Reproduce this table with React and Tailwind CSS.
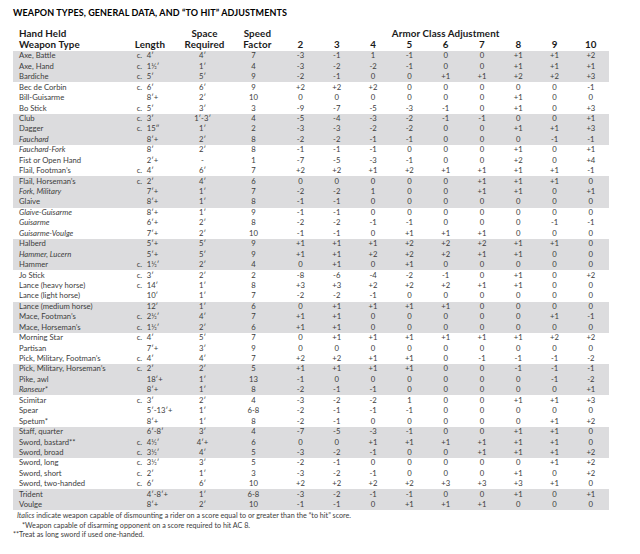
const data = `Axe, Battle|0|c.|4′|4′|7|-3 -1 1 -1 0 0 +1 +1 +2
Axe, Hand|0|c.|1½′|1′|4|-3 -2 -2 -1 0 0 +1 +1 +1
Bardiche|0|c.|5′|5′|9|-2 -1 0 0 +1 +1 +2 +2 +3
Bec de Corbin|0|c.|6′|6′|9|+2 +2 +2 0 0 0 0 0 -1
Bill-Guisarme|0||8′+|2′|10|0 0 0 0 0 0 +1 0 0
Bo Stick|0|c.|5′|3′|3|-9 -7 -5 -3 -1 0 +1 0 +3
Club|0|c.|3′|1′-3′|4|-5 -4 -3 -2 -1 -1 0 0 +1
Dagger|0|c.|15″|1′|2|-3 -3 -2 -2 0 0 +1 +1 +3
Fauchard|1||8′+|2′|8|-2 -2 -1 -1 0 0 0 -1 -1
Fauchard-Fork|1||8′|2′|8|-1 -1 -1 0 0 0 +1 0 +1
Fist or Open Hand|0||2′+|-|1|-7 -5 -3 -1 0 0 +2 0 +4
Flail, Footman’s|0|c.|4′|6′|7|+2 +2 +1 +2 +1 +1 +1 +1 -1
Flail, Horseman’s|0|c.|2′|4′|6|0 0 0 0 0 +1 +1 +1 0
Fork, Military|1||7′+|1′|7|-2 -2 1 0 0 +1 +1 0 +1
Glaive|0||8′+|1′|8|-1 -1 0 0 0 0 0 0 0
Glaive-Guisarme|1||8′+|1′|9|-1 -1 0 0 0 0 0 0 0
Guisarme|1||6′+|2′|8|-2 -2 -1 -1 0 0 0 -1 -1
Guisarme-Voulge|1||7′+|2′|10|-1 -1 0 +1 +1 +1 0 0 0
Halberd|0||5′+|5′|9|+1 +1 +1 +2 +2 +2 +1 +1 0
Hammer, Lucern|1||5′+|5′|9|+1 +1 +2 +2 +2 +1 +1 0 0
Hammer|0|c.|1½′|2′|4|0 +1 0 +1 0 0 0 0 0
Jo Stick|0|c.|3′|2′|2|-8 -6 -4 -2 -1 0 +1 0 +2
Lance (heavy horse)|0|c.|14′|1′|8|+3 +3 +2 +2 +2 +1 +1 0 0
Lance (light horse)|0||10′|1′|7|-2 -2 -1 0 0 0 0 0 0
Lance (medium horse)|0||12′|1′|6|0 +1 +1 +1 +1 0 0 0 0
Mace, Footman’s|0|c.|2½′|4′|7|+1 +1 0 0 0 0 0 +1 -1
Mace, Horseman’s|0|c.|1½′|2′|6|+1 +1 0 0 0 0 0 0 0
Morning Star|0|c.|4′|5′|7|0 +1 +1 +1 +1 +1 +1 +2 +2
Partisan|0||7′+|3′|9|0 0 0 0 0 0 0 0 0
Pick, Military, Footman’s|0|c.|4′|4′|7|+2 +2 +1 +1 0 -1 -1 -1 -2
Pick, Military, Horseman’s|0|c.|2′|2′|5|+1 +1 +1 +1 0 0 -1 -1 -1
Pike, awl|0||18′+|1′|13|-1 0 0 0 0 0 0 -1 -2
Ranseur*|1||8′+|1′|8|-2 -1 -1 0 0 0 0 0 +1
Scimitar|0|c.|3′|2′|4|-3 -2 -2 1 0 0 +1 +1 +3
Spear|0||5′-13′+|1′|6-8|-2 -1 -1 -1 0 0 0 0 0
Spetum*|0||8′+|1′|8|-2 -1 0 0 0 0 0 +1 +2
Staff, quarter|0||6′-8′|3′|4|-7 -5 -3 -1 0 0 +1 +1 0
Sword, bastard**|0|c.|4½′|4′+|6|0 0 +1 +1 +1 +1 +1 +1 0
Sword, broad|0|c.|3½′|4′|5|-3 -2 -1 0 0 +1 +1 +1 +2
Sword, long|0|c.|3½′|3′|5|-2 -1 0 0 0 0 0 +1 +2
Sword, short|0|c.|2′|1′|3|-3 -2 -1 0 0 0 +1 0 +2
Sword, two-handed|0|c.|6′|6′|10|+2 +2 +2 +2 +3 +3 +3 +1 0
Trident|0||4′-8′+|1′|6-8|-3 -2 -1 -1 0 0 +1 0 +1
Voulge|0||8′+|2′|10|-1 -1 0 +1 +1 +1 0 0 0`

const rows = data.split('\n').map(line => {
  const [name, it, pre, len, space, speed, adj] = line.split('|')
  return { name, italic: it === '1', pre, len, space, speed, adj: adj.split(' ') }
})

const groups = []
for (let i = 0; i < rows.length; i += 3) groups.push(rows.slice(i, i + 3))

const acCols = ['2', '3', '4', '5', '6', '7', '8', '9', '10']

function Row({ r }) {
  return (
    <div className="flex h-[10.45px] items-center leading-none">
      <div className={`w-[122px] pl-[6px] ${r.italic ? 'italic' : ''}`}>{r.name}</div>
      <div className="flex w-[50px] pl-[2px]">
        <span className="w-[10px]">{r.pre}</span>
        <span>{r.len}</span>
      </div>
      <div className="w-[40px] pr-[4px] text-center">{r.space}</div>
      <div className="w-[58px] text-center">{r.speed}</div>
      {r.adj.map((v, i) => (
        <div key={i} className="w-[36.4px] text-center">{v}</div>
      ))}
    </div>
  )
}

export default function App() {
  return (
    <div className="min-h-[554px] w-[640px] bg-white pt-[8px] text-[#3c3c3c]" style={{ fontFamily: 'Lato, "Liberation Sans", sans-serif' }}>
      <h1 className="pl-[13px] text-[9px] font-bold leading-[10px] tracking-[0.1px] text-black">
        WEAPON TYPES, GENERAL DATA, AND “TO HIT” ADJUSTMENTS
      </h1>

      <div className="ml-[13px] mt-[10px] w-[596px]">
        {/* header */}
        <div className="text-[9.8px] font-bold leading-[10.5px] tracking-[0.1px] text-[#1a1a1a]">
          <div className="flex">
            <div className="w-[122px] pl-[6px]">Hand Held</div>
            <div className="w-[50px]"></div>
            <div className="w-[40px] text-center">Space</div>
            <div className="w-[58px] pl-[8px] text-center">Speed</div>
            <div className="w-[327.6px] text-center">Armor Class Adjustment</div>
          </div>
          <div className="flex">
            <div className="w-[122px] pl-[6px]">Weapon Type</div>
            <div className="w-[50px]">Length</div>
            <div className="w-[40px] text-center">Required</div>
            <div className="w-[58px] pl-[8px] text-center">Factor</div>
            {acCols.map(c => (
              <div key={c} className="w-[36.4px] text-center">{c}</div>
            ))}
          </div>
        </div>

        {/* body */}
        <div className="mt-[2px] text-[7.7px]">
          {groups.map((g, gi) => (
            <div key={gi} className={gi % 2 === 0 ? 'bg-[#dcdcde]' : 'bg-white'}>
              {g.map(r => <Row key={r.name} r={r} />)}
            </div>
          ))}
        </div>
      </div>

      <div className="mt-[1px] text-[7.2px] leading-[9.5px] text-[#3c3c3c]">
        <p className="pl-[17px]"><span className="italic">Italics</span> indicate weapon capable of dismounting a rider on a score equal to or greater than the “to hit” score.</p>
        <p className="pl-[22px]">*Weapon capable of disarming opponent on a score required to hit AC 8.</p>
        <p className="pl-[13px]">**Treat as long sword if used one-handed.</p>
      </div>
    </div>
  )
}
